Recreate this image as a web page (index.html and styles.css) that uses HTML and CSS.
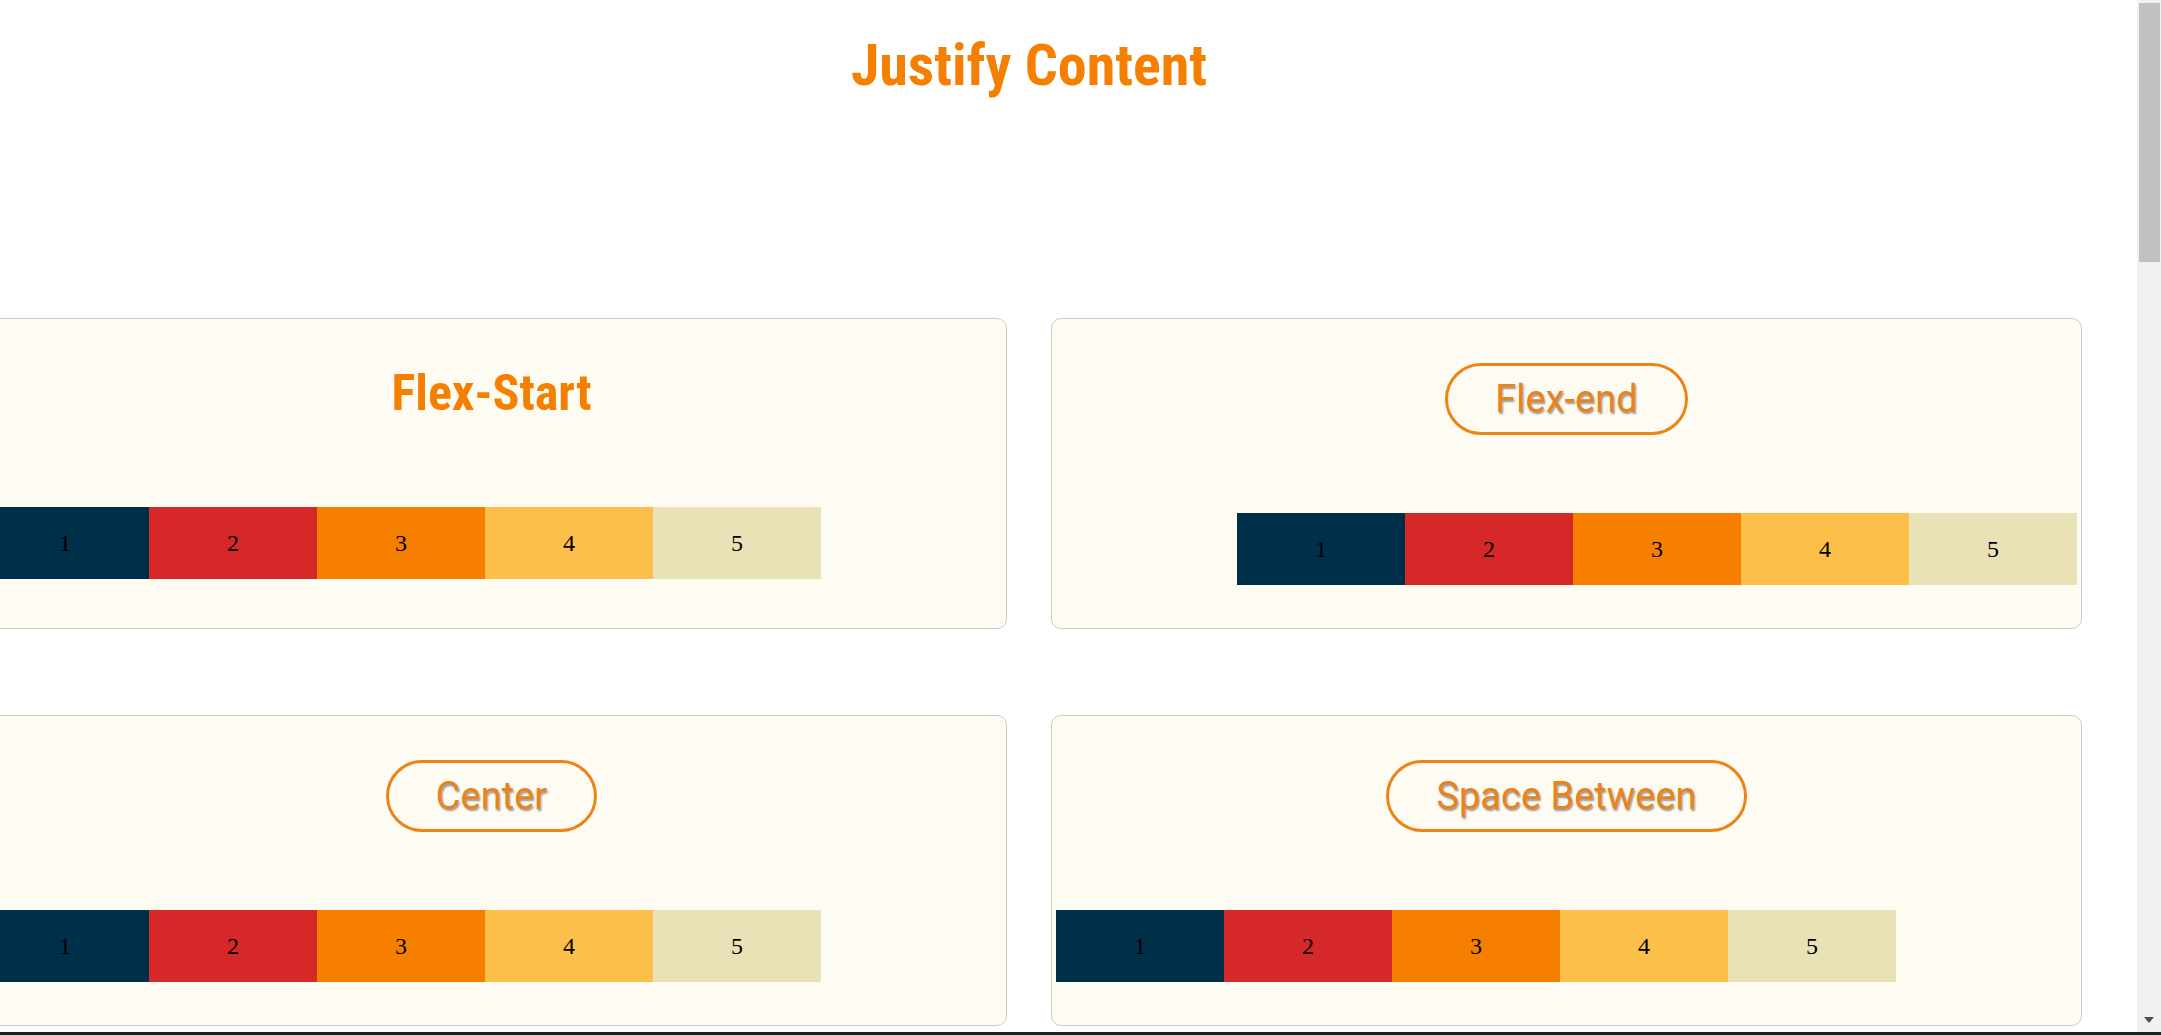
FILE: index.html
```html
<!DOCTYPE html>
<html lang="en">
<head>
<meta charset="utf-8">
<title>Justify Content</title>
<link rel="stylesheet" href="styles.css">
</head>
<body>
<main class="page">
  <h1 class="page-title">Justify Content</h1>
  <section class="grid">
    <article class="card">
      <h2 class="card-title card-title--plain">Flex-Start</h2>
      <div class="row row--start">
        <div class="box box--1">1</div>
        <div class="box box--2">2</div>
        <div class="box box--3">3</div>
        <div class="box box--4">4</div>
        <div class="box box--5">5</div>
      </div>
    </article>
    <article class="card">
      <h2 class="card-title card-title--pill">Flex-end</h2>
      <div class="row row--end">
        <div class="box box--1">1</div>
        <div class="box box--2">2</div>
        <div class="box box--3">3</div>
        <div class="box box--4">4</div>
        <div class="box box--5">5</div>
      </div>
    </article>
    <article class="card">
      <h2 class="card-title card-title--pill">Center</h2>
      <div class="row row--start">
        <div class="box box--1">1</div>
        <div class="box box--2">2</div>
        <div class="box box--3">3</div>
        <div class="box box--4">4</div>
        <div class="box box--5">5</div>
      </div>
    </article>
    <article class="card">
      <h2 class="card-title card-title--pill">Space Between</h2>
      <div class="row row--start">
        <div class="box box--1">1</div>
        <div class="box box--2">2</div>
        <div class="box box--3">3</div>
        <div class="box box--4">4</div>
        <div class="box box--5">5</div>
      </div>
    </article>
  </section>
</main>
<div class="scrollbar">
  <div class="scrollbar-thumb"></div>
  <div class="scrollbar-arrow"></div>
</div>
<div class="bottom-edge"></div>
</body>
</html>
```
FILE: styles.css
```css
html, body {
  margin: 0;
  padding: 0;
  background: #ffffff;
  overflow: hidden;
  height: 100%;
}

.page {
  width: 2106px;
  margin-left: -24px;
}

.page-title {
  margin: 30px 0 0;
  height: 70px;
  line-height: 70px;
  text-align: center;
  font-family: "Roboto Condensed", "Liberation Sans Narrow", "DejaVu Sans Condensed", Roboto, sans-serif;
  font-weight: 700;
  font-size: 58px;
  color: #f57f00;
}

.grid {
  margin-top: 218px;
  display: grid;
  grid-template-columns: 1031px 1031px;
  column-gap: 44px;
  row-gap: 86px;
}

.card {
  box-sizing: border-box;
  height: 311px;
  border: 1px solid #cccccc;
  border-radius: 10px;
  background: #fefbf3;
  padding: 0 4px;
  display: flex;
  flex-direction: column;
  align-items: center;
}

.card-title {
  margin: 0;
  font-weight: 400;
}

.card-title--plain {
  margin-top: 41px;
  height: 66px;
  line-height: 66px;
  font-family: "Roboto Condensed", "Liberation Sans Narrow", "DejaVu Sans Condensed", Roboto, sans-serif;
  font-weight: 700;
  font-size: 50px;
  color: #f57f00;
  margin-bottom: 81px;
}

.card-title--pill {
  margin-top: 44px;
  box-sizing: border-box;
  height: 72px;
  line-height: 66px;
  padding: 0 47px;
  border: 3px solid #ec8416;
  border-radius: 40px;
  font-family: Roboto, "Noto Sans", sans-serif;
  font-size: 38px;
  color: #e8841c;
  text-shadow: 1px 2px 2px rgba(0, 0, 0, 0.4);
  margin-bottom: 78px;
}

.row {
  align-self: stretch;
  display: flex;
}

.row--start { justify-content: flex-start; }
.row--end { justify-content: flex-end; }

.box {
  width: 168px;
  height: 72px;
  display: flex;
  align-items: center;
  justify-content: center;
  font-family: "Liberation Serif", "Times New Roman", serif;
  font-size: 24px;
  color: #000000;
}

.box--1 { background: #003049; }
.box--2 { background: #d62828; }
.box--3 { background: #f77f00; }
.box--4 { background: #fcbf49; }
.box--5 { background: #eae2b7; }

.scrollbar {
  position: fixed;
  top: 0;
  right: 0;
  width: 24px;
  height: 100%;
  background: #f1f1f1;
}

.scrollbar-thumb {
  position: absolute;
  top: 3px;
  left: 2px;
  width: 21px;
  height: 259px;
  background: #c1c1c1;
}

.scrollbar-arrow {
  position: absolute;
  bottom: 12px;
  left: 7px;
  width: 0;
  height: 0;
  border-left: 5px solid transparent;
  border-right: 5px solid transparent;
  border-top: 6px solid #505050;
}

.bottom-edge {
  position: fixed;
  left: 0;
  right: 0;
  bottom: 0;
  height: 3px;
  background: #1f1f1f;
}
```
